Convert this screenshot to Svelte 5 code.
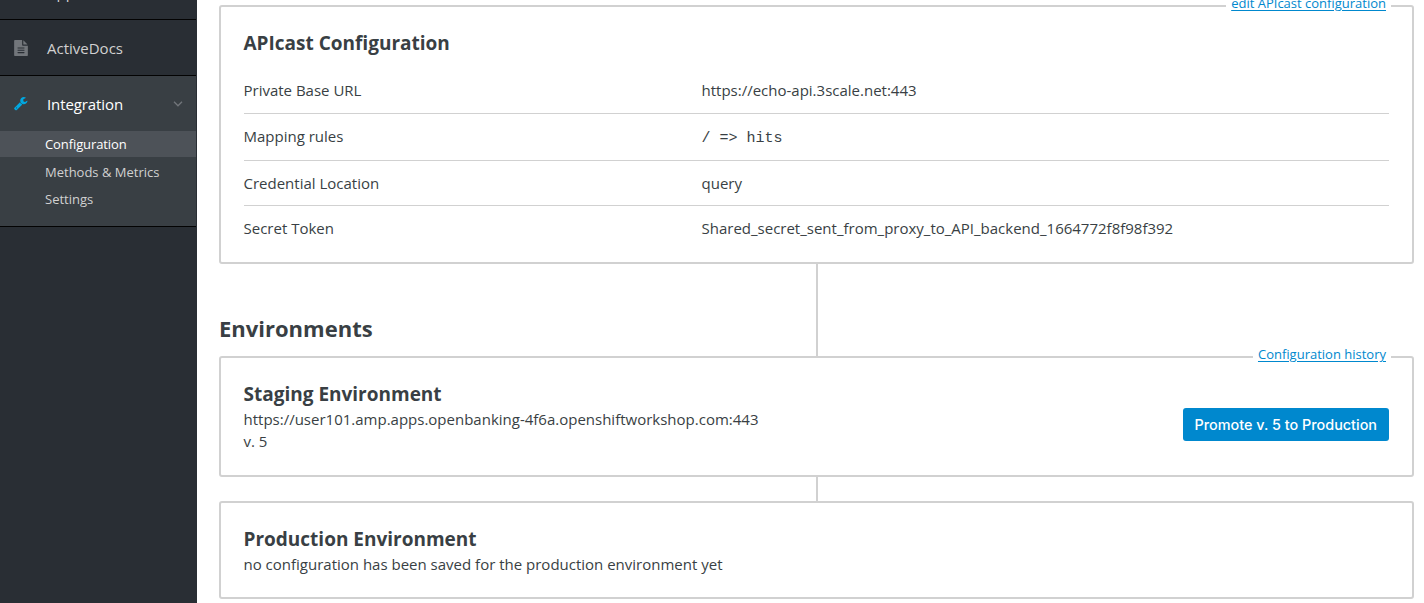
<script>
  const settings = [
    { label: 'Private Base URL', value: 'https://echo-api.3scale.net:443' },
    { label: 'Mapping rules', value: '/ => hits', code: true },
    { label: 'Credential Location', value: 'query' },
    { label: 'Secret Token', value: 'Shared_secret_sent_from_proxy_to_API_backend_1664772f8f98f392' }
  ];
  const subItems = ['Configuration', 'Methods & Metrics', 'Settings'];
</script>

<div class="page">
  <nav class="sidebar">
    <div class="item first"><span class="icon"></span><span>Applications</span></div>
    <div class="item">
      <svg class="icon" viewBox="0 0 1536 1792" width="14" height="16"><path d="M1024 512v-472q22 14 36 28l408 408q14 14 28 36h-472zM896 544q0 40 28 68t68 28h544v1056q0 40-28 68t-68 28h-1344q-40 0-68-28t-28-68v-1600q0-40 28-68t68-28h800v544zM1152 1440v-64q0-14-9-23t-23-9h-704q-14 0-23 9t-9 23v64q0 14 9 23t23 9h704q14 0 23-9t9-23zM1152 1184v-64q0-14-9-23t-23-9h-704q-14 0-23 9t-9 23v64q0 14 9 23t23 9h704q14 0 23-9t9-23zM1152 928v-64q0-14-9-23t-23-9h-704q-14 0-23 9t-9 23v64q0 14 9 23t23 9h704q14 0 23-9t9-23z" /></svg>
      <span>ActiveDocs</span>
    </div>
    <div class="group">
      <div class="item open">
        <svg class="icon" viewBox="64 64 1728 1728" width="15" height="15"><path d="M448 1472q0-26-19-45t-45-19-45 19-19 45 19 45 45 19 45-19 19-45zm644-420l-682 682q-37 37-90 37-52 0-91-37l-106-108q-38-36-38-90 0-53 38-91l681-681q39 98 114.500 173.500t173.500 114.500zm634-435q0 39-23 106-47 134-164.500 217.500t-258.500 83.500q-185 0-316.500-131.500t-131.500-316.500 131.500-316.500 316.500-131.500q58 0 121.500 16.500t107.500 46.500q16 11 16 28t-16 28l-293 169v224l193 107q5-3 79-48.500t135.500-81 70.500-35.500q15 0 23.500 10t8.500 25z" /></svg>
        <span>Integration</span>
        <svg class="chevron" viewBox="0 0 10 6" width="10" height="6"><path d="M1 .8 5 4.8 9 .8" /></svg>
      </div>
      <ul>
        {#each subItems as label, i}
          <li class:current={i === 0}>{label}</li>
        {/each}
      </ul>
    </div>
  </nav>

  <main>
    <section class="panel config">
      <a class="corner">edit APIcast configuration</a>
      <h3>APIcast Configuration</h3>
      <dl>
        {#each settings as s}
          <div class="row">
            <dt>{s.label}</dt>
            <dd class:code={s.code}>{s.value}</dd>
          </div>
        {/each}
      </dl>
    </section>

    <div class="link heading"><h2>Environments</h2></div>

    <section class="panel staging">
      <a class="corner">Configuration history</a>
      <div>
        <h3>Staging Environment</h3>
        <p>https://user101.amp.apps.openbanking-4f6a.openshiftworkshop.com:443</p>
        <p>v. 5</p>
      </div>
      <button>Promote v. 5 to Production</button>
    </section>

    <div class="link"></div>

    <section class="panel production">
      <h3>Production Environment</h3>
      <p>no configuration has been saved for the production environment yet</p>
    </section>
  </main>
</div>

<style>
  .page {
    display: flex;
    width: 1424px;
    height: 603px;
    overflow: hidden;
    background: #fff;
    color: #393f44;
    font: 15px/22px 'Open Sans', sans-serif;
  }
  .page * { box-sizing: border-box; }
  .sidebar {
    flex: none;
    width: 197px;
    background: #292e34;
    border-right: 1px solid #292e34;
    color: #d1d1d1;
  }
  .item {
    display: flex;
    align-items: center;
    height: 56px;
    padding: 0 13px 0 14px;
    border-bottom: 1px solid #030303;
  }
  .item.first { margin-top: -36px; }
  .icon { flex: none; width: 14px; margin-right: 19px; fill: #72767b; }
  .group {
    height: 151px;
    background: #393f44;
    border-bottom: 1px solid #030303;
  }
  .item.open { height: 55px; border: 0; color: #fff; }
  .item.open span { font-weight: 500; letter-spacing: -.1px; }
  .open .icon { fill: #00a8e1; }
  .chevron { margin-left: auto; fill: none; stroke: #72767b; stroke-width: 1.3; }
  ul { margin: 0; padding: 0; list-style: none; font-size: 13px; }
  li { height: 27px; padding-left: 45px; line-height: 27px; }
  li.current { height: 26px; margin-bottom: 2px; background: #4d5258; color: #fff; font-weight: 500; letter-spacing: -.1px; }
  main { flex: 1; padding: 5px 10px 0 22px; }
  .panel { position: relative; border: 2px solid #d1d1d1; border-radius: 3px; padding: 24px 23px 0 22.5px; }
  .config { height: 259px; }
  .staging { display: flex; align-items: flex-start; justify-content: space-between; height: 121px; }
  .production { height: 98px; }
  .corner {
    position: absolute;
    top: -15px;
    right: 21px;
    padding: 0 5px;
    background: #fff;
    color: #0088ce;
    font-size: 13px;
    line-height: 22px;
    text-decoration: underline;
    text-underline-offset: 2px;
  }
  h2, h3, p, dl, dd { margin: 0; }
  h2 { font-size: 22px; line-height: 30px; }
  h3 { font-size: 19px; line-height: 24px; }
  h3 + p { margin-top: 2px; }
  dl { margin-top: 13px; }
  .row { display: grid; grid-template-columns: 458px 1fr; height: 46px; padding-top: 11px; border-bottom: 1px solid #d1d1d1; }
  .row:nth-child(2) { height: 47px; }
  .row:nth-child(3) { height: 45px; }
  .row:last-child { border: 0; }
  .code { padding-top: 3px; font-family: 'Liberation Mono', monospace; }
  .link { height: 24px; background: linear-gradient(#d1d1d1, #d1d1d1) 597px 0 / 2px 100% no-repeat; }
  .heading { height: 92px; padding-top: 49px; }
  button {
    height: 33px;
    margin-top: 26px;
    padding: 0 12px;
    border: 0;
    border-radius: 3px;
    background: #0088ce;
    color: #fff;
    font: 500 14.4px 'Inter', sans-serif;
    white-space: nowrap;
  }
</style>
